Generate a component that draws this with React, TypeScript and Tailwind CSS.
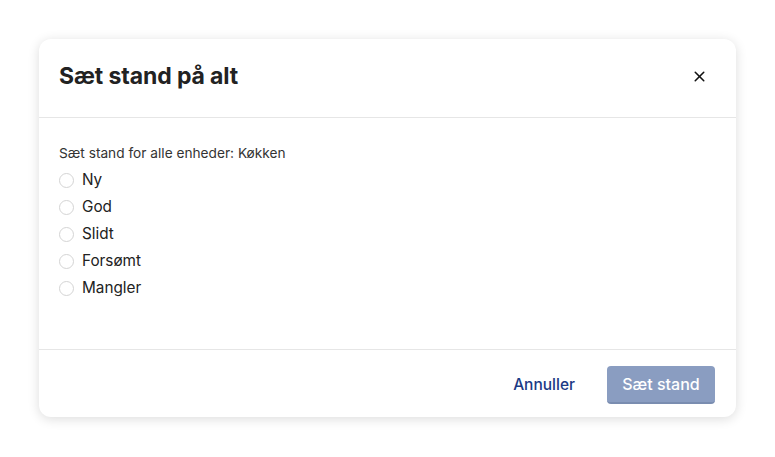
import { X } from 'lucide-react';

const options = ['Ny', 'God', 'Slidt', 'Forsømt', 'Mangler'];

const App = () => {
  return (
    <div
      className="w-[775px] h-[457px] bg-white pt-[39px] pl-[39px]"
      style={{ fontFamily: 'Inter, "Noto Sans", sans-serif' }}
    >
      <div className="w-[697px] h-[378px] bg-white rounded-[12px] shadow-[0_2px_12px_rgba(0,0,0,0.14)] flex flex-col">
        <div className="h-[79px] flex items-center justify-between pl-[20px] pr-[28px] pb-[4px] border-b border-[#e6e6e6]">
          <h2 className="text-[23px] font-bold text-[#222] tracking-[-0.1px]">Sæt stand på alt</h2>
          <button className="text-[#111]">
            <X size={17} strokeWidth={2.2} />
          </button>
        </div>
        <div className="flex-1 pl-[20px] pt-[27px] border-b border-[#e6e6e6]">
          <p className="text-[13.7px] text-[#333] leading-[16px]">Sæt stand for alle enheder: Køkken</p>
          <div className="mt-[6px] flex flex-col">
            {options.map((o) => (
              <label key={o} className="flex items-center h-[27px] gap-[8px]">
                <span className="w-[15px] h-[15px] rounded-full border-[1.5px] border-[#d4d4d4] bg-white" />
                <span className="text-[15.3px] text-[#222]">{o}</span>
              </label>
            ))}
          </div>
        </div>
        <div className="h-[67px] flex items-center justify-end gap-[32px] pr-[21px] pt-[2px]">
          <button className="text-[15.5px] font-medium text-[#1b3a85]">Annuller</button>
          <button className="h-[38px] w-[108px] rounded-[4px] bg-[#8a9dc1] text-white text-[16px] font-medium border-b-2 border-[#7a8db0]">
            Sæt stand
          </button>
        </div>
      </div>
    </div>
  );
};

export default App;
